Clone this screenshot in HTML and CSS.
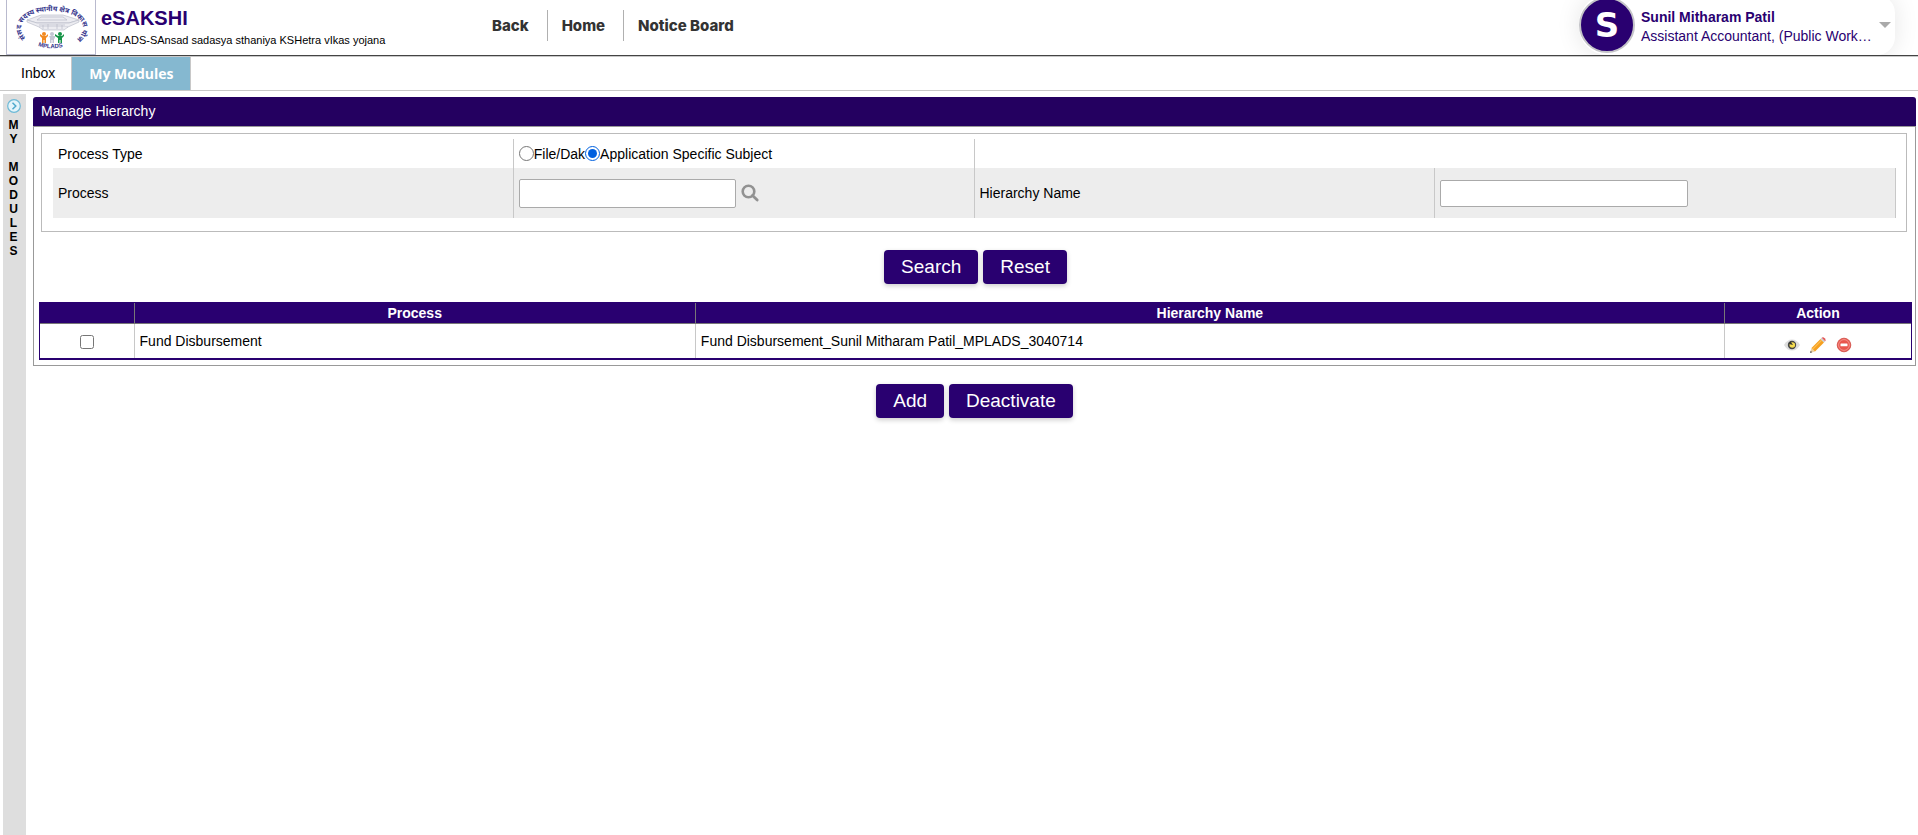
FILE: index.html
```html
<!DOCTYPE html>
<html lang="en">
<head>
<meta charset="utf-8">
<title>eSAKSHI - Manage Hierarchy</title>
<link rel="stylesheet" href="styles.css">
</head>
<body>
<header class="header">
  <div class="logo">
    <svg viewBox="0 0 88 54" width="88" height="54" role="img" aria-label="MPLADS">
      <defs>
        <path id="arc" d="M19 38C6 25 20 11 45 11S84 25 71 38"/>
        <path id="base" d="M31 46Q45 51 62 45"/>
      </defs>
      <text class="logo-ring"><textPath href="#arc">संसद सदस्य स्थानीय क्षेत्र विकास योजना</textPath></text>
      <g fill="#ececf1" stroke="#b2b5c2" stroke-width=".6">
        <path d="M20 20L34 15H56L72 20L62 23H30Z"/>
        <path d="M20 20V22L32 27H61L72 22V20L62 23H30Z"/>
        <path d="M34 17H56L60 20H30ZM32 25H58M32 27L36 30H57L61 27M41 24V29M50 24V29M36 25V29M55 25V29"/>
      </g>
      <g fill="#f28a20"><circle cx="37" cy="34" r="2"/><path d="M33 34L36 36H39L41 34V36L39 38V43H37.500V40H36.500V43H35V38L33 36Z"/></g>
      <g fill="#c3c5d3"><circle cx="45" cy="34" r="2"/><path d="M42 36H48V39L47 38V43H45.500V40H44.500V43H43V38Z"/></g>
      <g fill="#169447"><circle cx="53" cy="34" r="2"/><path d="M48 34L51 36H55L57 34V36L55 38V43H53.500V40H52.500V43H51V38L48 36Z"/></g>
      <text class="logo-base"><textPath href="#base">MPLADS</textPath></text>
    </svg>
  </div>
  <div class="brand">
    <h1 class="brand-name">eSAKSHI</h1>
    <p class="brand-sub">MPLADS-SAnsad sadasya sthaniya KSHetra vIkas yojana</p>
  </div>
  <nav class="nav">
    <a href="#back">Back</a>
    <a href="#home">Home</a>
    <a href="#notices">Notice Board</a>
  </nav>
  <button class="user" type="button">
    <span class="avatar">S</span>
    <span class="user-text">
      <span class="user-name">Sunil Mitharam Patil</span>
      <span class="user-role">Assistant Accountant, (Public Work…</span>
    </span>
    <span class="caret"></span>
  </button>
</header>
<nav class="tabs">
  <a class="tab" href="#inbox">Inbox</a>
  <a class="tab tab-active" href="#modules">My Modules</a>
</nav>
<div class="layout">
  <aside class="rail">
    <button class="rail-toggle" type="button" aria-label="Expand modules">
      <svg viewBox="0 0 14 14" width="14" height="14"><circle cx="7" cy="7" r="6.300" fill="#e4f4fa" stroke="#6db9d6" stroke-width="1.200"/><path d="M5.500 3.800L8.800 7L5.500 10.200" fill="none" stroke="#4fa9cc" stroke-width="1.500"/></svg>
    </button>
    <div class="rail-label">M
Y

M
O
D
U
L
E
S</div>
  </aside>
  <main class="main">
    <section class="panel">
      <h2 class="panel-title">Manage Hierarchy</h2>
      <div class="panel-body">
        <form class="filters">
          <div class="row">
            <div class="cell">Process Type</div>
            <div class="cell radios">
              <label><input type="radio" name="type">File/Dak</label><label><input type="radio" name="type" checked>Application Specific Subject</label>
            </div>
            <div class="cell"></div>
          </div>
          <div class="row row-shaded">
            <label class="cell" for="process">Process</label>
            <div class="cell">
              <input class="field" id="process" type="text">
              <button class="icon-button" type="button" aria-label="Find process">
                <svg viewBox="0 0 18 18" width="18" height="18" fill="none" stroke="#929292"><circle cx="7.500" cy="7.500" r="5.800" stroke-width="2.600"/><path d="M11.500 11.500L16.200 16" stroke-width="2.800" stroke-linecap="round"/></svg>
              </button>
            </div>
            <label class="cell" for="hierarchy">Hierarchy Name</label>
            <div class="cell"><input class="field field-wide" id="hierarchy" type="text"></div>
          </div>
        </form>
        <div class="actions actions-search">
          <button class="button" type="button">Search</button>
          <button class="button" type="button">Reset</button>
        </div>
        <table class="grid">
          <thead>
            <tr><th class="col-check"></th><th class="col-process">Process</th><th class="col-name">Hierarchy Name</th><th class="col-action">Action</th></tr>
          </thead>
          <tbody>
            <tr>
              <td class="center"><input class="check" type="checkbox" aria-label="Select Fund Disbursement"></td>
              <td>Fund Disbursement</td>
              <td>Fund Disbursement_Sunil Mitharam Patil_MPLADS_3040714</td>
              <td>
                <div class="row-actions">
                  <button class="icon-button" type="button" aria-label="View">
                    <svg viewBox="0 0 16 16" width="16" height="16"><path d="M0 8Q3 2.500 8 2.500T16 8Q13 13.500 8 13.500T0 8Z" fill="#dedede"/><circle cx="8" cy="8" r="4.200" fill="#454545"/><circle cx="8.300" cy="8" r="2.800" fill="#f5dc50"/><path d="M6.500 4.500L9 8L5 7Z" fill="#333"/></svg>
                  </button>
                  <button class="icon-button" type="button" aria-label="Edit">
                    <svg viewBox="0 0 16 16" width="16" height="16"><path d="M0 16L1.500 11L5 14.500Z" fill="#ecd0a0"/><path d="M0 16L.7 13.800L2.200 15.300Z" fill="#555"/><path d="M1.500 11L10.500 2L14 5.500L5 14.500Z" fill="#f5a020"/><path d="M2.700 12.200L11.700 3.200" stroke="#ffbd50" stroke-width="1.200"/><path d="M10.500 2L11.700 .8L15.200 4.300L14 5.500Z" fill="#c9cdd2"/><path d="M11.700 .8Q13 -.3 14.700 1.200Q16.500 3 15.200 4.300Z" fill="#e25555"/></svg>
                  </button>
                  <button class="icon-button" type="button" aria-label="Deactivate row">
                    <svg viewBox="0 0 16 16" width="16" height="16"><circle cx="8" cy="8" r="6.800" fill="#e9564d" stroke="#cf4a42" stroke-width=".8"/><circle cx="8" cy="8" r="5.400" fill="none" stroke="#f59a92" stroke-width=".9"/><rect x="4.500" y="6.500" width="7" height="2.800" rx=".5" fill="#fff"/></svg>
                  </button>
                </div>
              </td>
            </tr>
          </tbody>
        </table>
      </div>
    </section>
    <div class="actions actions-page">
      <button class="button" type="button">Add</button>
      <button class="button" type="button">Deactivate</button>
    </div>
  </main>
</div>
</body>
</html>
```
FILE: styles.css
```css
* { box-sizing: border-box; }

body {
  display: flex;
  flex-direction: column;
  min-height: 100vh;
  margin: 0;
  background: #fff;
  color: #000;
  font: 14px/16px "Liberation Sans", Arial, sans-serif;
}

a { color: inherit; text-decoration: none; }
h1, h2, p { margin: 0; }
button, input { font: inherit; }

/* Header */
.header {
  display: flex;
  height: 57px;
  overflow: hidden;
  padding-left: 6px;
  border-bottom: 1px solid #c8c8c8;
  box-shadow: inset 0 -1px #444;
}
.logo {
  width: 90px;
  height: 55px;
  border: 1px solid #b9bace;
  border-top: 0;
}
.logo svg { display: block; }
.logo-ring { font: bold 7px "Noto Sans", sans-serif; fill: #35358c; }
.logo-base { font: bold 6px "Liberation Sans", Arial, sans-serif; fill: #35358c; }
.brand { width: 394px; padding: 6px 0 0 5px; }
.brand-name { color: #290070; font-size: 20px; line-height: 24px; }
.brand-sub { margin-top: 3px; font-size: 11px; line-height: 14px; }

.nav { display: flex; padding-top: 10px; }
.nav a {
  height: 31px;
  padding: 0 18px 0 14px;
  color: #333;
  font: 800 15px/32px Inter, "Liberation Sans", sans-serif;
}
.nav a:first-child { padding-left: 2px; }
.nav a + a { border-left: 1px solid #b0b0b0; }

.user {
  display: flex;
  align-items: center;
  width: 316px;
  height: 60px;
  margin: -5px 23px 0 auto;
  padding: 0 4px 0 0;
  border: 0;
  border-radius: 28px 18px 18px 28px;
  background: #fff;
  box-shadow: 0 0 24px rgba(0, 0, 0, .1);
  color: #290070;
  text-align: left;
}
.avatar {
  flex: none;
  width: 56px;
  height: 56px;
  border: 2px solid #c4c4c8;
  border-radius: 50%;
  background: #290070;
  color: #fff;
  font: bold 34px/52px "DejaVu Sans", sans-serif;
  text-align: center;
}
.user-text { flex: 1; padding: 2px 0 0 6px; white-space: nowrap; }
.user-name, .user-role { display: block; }
.user-name { font-weight: bold; line-height: 20px; }
.user-role { line-height: 18px; }
.caret { border: 6px solid transparent; border-top-color: #aaa; border-bottom: 0; }

/* Tabs */
.tabs { display: flex; height: 34px; border-bottom: 1px solid #c8c8c8; }
.tab { padding: 0 16px 0 21px; line-height: 33px; }
.tab-active {
  padding: 0 17px;
  border: solid #c8c8c8;
  border-width: 0 1px;
  background: #85b8d0;
  color: #fff;
  font-family: "Open Sans", sans-serif;
  font-weight: bold;
}

/* Side rail and content */
.layout { display: flex; flex: 1; padding: 3px 2px 0 3px; }
.rail { width: 23px; margin-right: 7px; padding-right: 2px; background: #dedede; text-align: center; }
.rail-toggle { display: block; margin: 5px auto 0; padding: 0; border: 0; background: none; }
.rail-toggle svg { display: block; }
.rail-label { margin-top: 5px; font-size: 12px; line-height: 14px; font-weight: bold; white-space: pre-line; }
.main { flex: 1; min-width: 0; padding-top: 3px; }

.panel-title {
  padding: 6px 8px 7px;
  border-radius: 3px 3px 0 0;
  background: #240060;
  color: #fff;
  font-size: 14px;
  font-weight: normal;
  line-height: 16px;
}
.panel-body { padding: 6px 3px 5px 5px; border: 1px solid #999; }

.filters { margin: 0 5px 0 2px; padding: 5px 10px 13px 11px; border: 1px solid #bbb; }
.row { display: grid; grid-template-columns: repeat(4, 1fr); }
.cell {
  display: flex;
  align-items: center;
  min-height: 29px;
  padding: 0 5px;
  border-right: 1px solid #c8c8c8;
}
.row:first-child .cell:last-child { border-right: 0; }
.row-shaded { background: #ededed; }
.row-shaded .cell { min-height: 50px; }
.radios label { display: flex; align-items: center; }
.radios input { width: 15px; height: 15px; margin: 0; accent-color: #0060df; }
.field { width: 217px; height: 29px; padding: 2px 4px; border: 1px solid #aaa; border-radius: 2px; background: #fff; }
.field-wide { width: 248px; height: 27px; }
.icon-button { padding: 0; border: 0; background: none; }
.icon-button svg { display: block; overflow: visible; }
.cell .icon-button { margin-left: 5px; }

/* Buttons */
.actions { display: flex; justify-content: center; gap: 5px; }
.actions-search { margin: 18px 0; }
.actions-page { margin-top: 18px; }
.button {
  height: 34px;
  padding: 0 17px;
  border: 0;
  border-radius: 4px;
  background: #290070;
  box-shadow: 0 2px 5px rgba(0, 0, 0, .2);
  color: #fff;
  font-size: 19px;
}

/* Results */
.grid { width: 100%; border: 1px solid #290070; border-bottom-width: 2px; border-spacing: 0; table-layout: fixed; }
.grid th { height: 21px; padding: 0; border-bottom: 1px solid #777; background: #290070; color: #fff; }
.grid td { height: 34px; padding: 0 5px; }
.grid th + th { border-left: 1px solid #777; }
.grid td + td { border-left: 1px solid #c8c8c8; }
.grid .center { text-align: center; }
.col-check { width: 5%; }
.col-process { width: 30%; }
.col-name { width: 55%; }
.col-action { width: 10%; }
.check { width: 14px; height: 14px; margin: 0; vertical-align: middle; }
.row-actions { display: flex; justify-content: center; gap: 10px; padding-top: 8px; }
```
